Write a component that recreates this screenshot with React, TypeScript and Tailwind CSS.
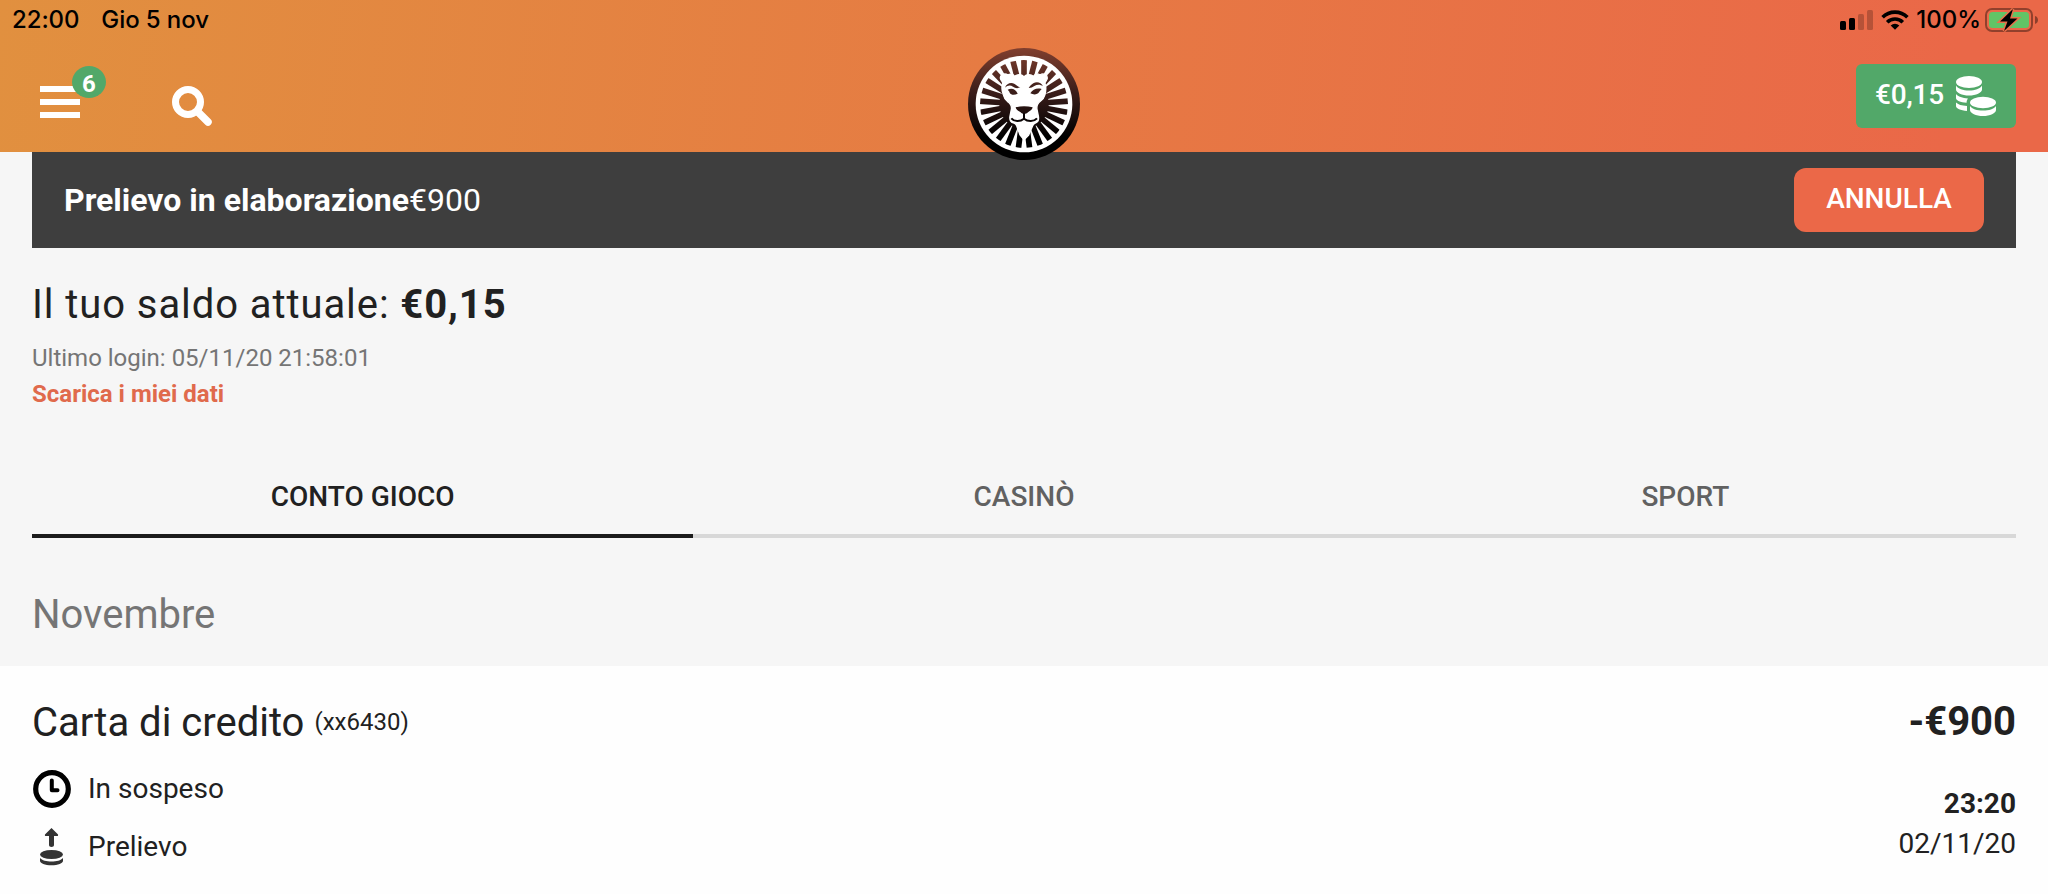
import { ReactNode } from 'react';

const GAPS = Array.from({ length: 25 }, (_, i) => 7.2 + i * 14.4);

const TABS = ['CONTO GIOCO', 'CASINÒ', 'SPORT'];

function SignalIcon() {
  return (
    <svg width="34" height="20" viewBox="0 0 34 20">
      <rect x="0" y="11" width="6" height="9" rx="1.5" />
      <rect x="9" y="8" width="6" height="12" rx="1.5" />
      <rect x="18" y="4" width="6" height="16" rx="1.5" opacity="0.22" />
      <rect x="27" y="0" width="6" height="20" rx="1.5" opacity="0.22" />
    </svg>
  );
}

function WifiIcon() {
  return (
    <svg width="28" height="20" viewBox="0 0 28 20" fill="none" stroke="#000" strokeWidth="3.6">
      <path d="M1.600 7.200a17.600 17.600 0 0 1 24.800 0" />
      <path d="M6.200 12.200a11 11 0 0 1 15.600 0" />
      <path d="M14 19.800l-4.300-4.400a6.200 6.200 0 0 1 8.600 0z" fill="#000" stroke="none" />
    </svg>
  );
}

function BatteryIcon() {
  return (
    <svg width="54" height="26" viewBox="0 0 54 26">
      <rect x="1" y="2" width="46" height="22" rx="6" fill="none" stroke="#000" strokeOpacity="0.38" strokeWidth="2" />
      <rect x="4" y="5" width="40" height="16" rx="3.5" fill="#62c466" />
      <path d="M50 9c2 .6 3 2.200 3 4s-1 3.400-3 4z" opacity="0.4" />
      <path d="M28 2L15 14.500h7.500L19 24l13.500-12.500H25z" fill="#000" stroke="#e9704a" strokeWidth="3" paintOrder="stroke" />
    </svg>
  );
}

function SearchIcon() {
  return (
    <svg width="42" height="42" viewBox="0 0 42 42" fill="none" stroke="#fff" strokeWidth="7" strokeLinecap="round">
      <circle cx="16" cy="16" r="12.500" />
      <path d="M26.500 26.500l9.500 9.500" strokeWidth="7.500" />
    </svg>
  );
}

function CoinsIcon() {
  return (
    <svg width="40" height="40" viewBox="0 0 40 40" fill="#fff">
      <ellipse cx="13" cy="6" rx="13" ry="6" />
      <path d="M0 9.500c2 3.200 7 5 13 5s11-1.800 13-5v4c0 3.300-6 6-13 6s-13-2.700-13-6z" />
      <path d="M0 18c2 2.600 6.500 4.200 12 4.400-1 1.200-1.400 2.600-1.400 4.400C4.500 26.500 0 24.500 0 22z" />
      <path d="M0 26.500c2 2 5.500 3.200 11 3.500v5C4.500 34.500 0 32.500 0 30z" />
      <ellipse cx="27" cy="26.500" rx="13" ry="5.800" />
      <path d="M14 30c2 3 7 4.600 13 4.600s11-1.600 13-4.600v4c0 3.300-6 6-13 6s-13-2.700-13-6z" />
    </svg>
  );
}

function ClockIcon() {
  return (
    <svg width="38" height="38" viewBox="0 0 38 38" fill="none" stroke="#000">
      <circle cx="19" cy="19" r="16.300" strokeWidth="5.200" />
      <path d="M18.800 10.500v9.800h5.700" strokeWidth="4" strokeLinecap="round" strokeLinejoin="round" />
    </svg>
  );
}

function WithdrawIcon() {
  return (
    <svg width="38" height="38" viewBox="0 0 38 38" fill="#333">
      <path d="M18.500 0l6.300 6.200c.7.800.3 1.800-.7 1.800H21v8.900c0 1.200-1 2-2.500 2s-2.500-.8-2.500-2V8h-3.100c-1 0-1.400-1-.7-1.800z" />
      <ellipse cx="18.500" cy="26.500" rx="11.500" ry="4.600" />
      <path d="M7 30c2 2.400 6.500 3.600 11.500 3.600S28 32.400 30 30v2.700c0 2.500-5 4.500-11.500 4.500S7 35.200 7 32.700z" />
    </svg>
  );
}

function LionLogo() {
  return (
    <svg width="112" height="112" viewBox="54 24 336 336">
      <defs>
        <linearGradient id="lion" gradientUnits="userSpaceOnUse" x1="0" y1="24" x2="0" y2="290">
          <stop offset="0" stopColor="#813f2e" />
          <stop offset="0.5" stopColor="#3a1d1a" />
          <stop offset="1" stopColor="#000" />
        </linearGradient>
      </defs>
      <circle cx="222" cy="192" r="168" fill="url(#lion)" />
      <circle cx="222" cy="192" r="145" fill="#fff" />
      <circle cx="222" cy="192" r="132" fill="url(#lion)" />
      {GAPS.map((deg) => (
        <path key={deg} d="M213.500 56h17l-7.500 62h-2z" fill="#fff" transform={`rotate(${deg} 222 192)`} />
      ))}
      <path
        d="M222 110c-8-7-20-8-28-1-5-7-14-9-20-4-12-8-28 2-21 15 3 5 5 6 5 10-4 12-2 24 2 34 2 8 4 14 12 20 10 6 14 12 12 24l-4 20c-2 12 2 20 12 21 4 1 6 4 8 8l10 28 12 14 14-14 12-28c2-4 4-7 8-8 9-3 11-11 9-21l-4-20c-2-12 2-18 10-24 8-6 12-12 14-20 3-12 4-22 0-34 0-4 4-7 6-12 4-12-10-21-21-13-7-5-15-3-20 4-8-7-20-6-28 1z"
        fill="#fff"
        stroke="#fff"
        strokeWidth="4"
      />
      <g fill="url(#lion)">
        <path d="M165 143c5-14 19-17 29-11 6 4 11 9 17 9-8 6-16 3-22-1-8-6-16-5-24 3z" />
        <path d="M279 139c-5-12-19-15-29-9-6 4-10 8-14 14 7 0 12-3 17-6 9-5 18-5 26 1z" />
        <path d="M173 149c12-6 24-2 30 12-10 5-20 4-24-3-1-4-3-6-6-9z" />
        <path d="M275 147c-13-4-27 0-34 13 10 5 21 4 26-3 2-4 4-6 8-10z" />
        <path d="M197 202c16-4 34-4 51 0-1 8-9 11-14 15-6 6-17 6-22 0-5-4-14-7-15-15z" />
      </g>
      <g fill="none" stroke="#0c0606" strokeWidth="6">
        <path d="M222 219v17" />
        <path d="M184 235c8 10 26 11 38 1 12 10 30 9 39-1" />
      </g>
    </svg>
  );
}

function StatusRow({ icon, label }: { icon: ReactNode; label: string }) {
  return (
    <div className="flex items-center gap-[17px] h-10 pl-px text-[28px] leading-10">
      {icon}
      <span>{label}</span>
    </div>
  );
}

export default function App() {
  return (
    <div className="w-full h-[894px] overflow-hidden bg-[#f6f6f6] text-[#212121] font-['Roboto',sans-serif]">
      <header className="h-[152px] bg-[linear-gradient(97deg,#e1903f_0%,#e67b43_48%,#ea6848_95%)]">
        <div className="flex items-center justify-between h-10 pl-3 pr-[9px] text-black text-2xl font-medium font-['Inter',sans-serif]">
          <div className="flex gap-[22px] tracking-[-0.100px]">
            <span>22:00</span>
            <span>Gio 5 nov</span>
          </div>
          <div className="flex items-center">
            <SignalIcon />
            <div className="ml-[7px]"><WifiIcon /></div>
            <span className="ml-[7px] mr-1">100%</span>
            <BatteryIcon />
          </div>
        </div>

        <div className="grid grid-cols-3 px-8">
          <div className="flex items-start pl-2 pt-[46px]">
            <button className="relative flex flex-col gap-[7.500px] w-10" aria-label="Menu">
              <span className="h-[5.500px] w-full bg-white" />
              <span className="h-[5.500px] w-full bg-white" />
              <span className="h-[5.500px] w-full bg-white" />
              <span className="absolute left-8 -top-5 w-[34px] h-8 rounded-[50%] bg-[#52a869] text-white text-2xl leading-[36px] font-bold text-center">6</span>
            </button>
            <button className="ml-[92px]" aria-label="Cerca"><SearchIcon /></button>
          </div>
          <div className="relative z-10 flex justify-center h-[112px] pt-2">
            <LionLogo />
          </div>
          <div className="flex justify-end pt-6">
            <button className="flex items-center justify-between w-40 h-16 pl-[19px] pr-5 rounded-md bg-[#52a869] text-white text-[28px] font-medium">
              <span className="pb-0.5 tracking-[-0.200px]">€0,15</span>
              <CoinsIcon />
            </button>
          </div>
        </div>
      </header>

      <main>
        <div className="px-8">
          <div className="flex items-center justify-between h-24 px-8 bg-[#3e3e3e] text-white text-[32px]">
            <p><strong className="font-bold">Prelievo in elaborazione</strong>€900</p>
            <button className="w-[190px] h-16 pb-0.5 rounded-xl bg-[#eb6848] text-[28px] font-medium">ANNULLA</button>
          </div>

          <h1 className="mt-[33px] text-[40px] leading-[48px] tracking-[0.920px]">
            Il tuo saldo attuale: <strong className="font-bold">€0,15</strong>
          </h1>
          <p className="mt-[11px] text-2xl leading-9 text-[#757575]">Ultimo login: 05/11/20 21:58:01</p>
          <a className="block text-2xl leading-9 font-bold text-[#e06a4c]">Scarica i miei dati</a>

          <nav className="grid grid-cols-3 mt-[65px]">
            {TABS.map((tab, i) => (
              <button
                key={tab}
                className={`pb-[17px] border-b-4 text-[28px] leading-10 font-medium ${i === 0 ? 'border-[#1c1c1c]' : 'border-[#d8d8d8] text-[#616161]'}`}
              >
                {tab}
              </button>
            ))}
          </nav>

          <h2 className="mt-[53px] pb-[27px] text-[40px] leading-[48px] text-[#757575]">Novembre</h2>
        </div>

        <section className="flex justify-between h-[228px] px-8 pt-[33px] bg-[#fefefe]">
          <div>
            <div className="flex items-center gap-2.5">
              <h3 className="text-[40px] leading-[48px]">Carta di credito</h3>
              <span className="pb-[3px] text-2xl">(xx6430)</span>
            </div>
            <div className="flex flex-col gap-[17.500px] mt-[22px]">
              <StatusRow icon={<ClockIcon />} label="In sospeso" />
              <StatusRow icon={<WithdrawIcon />} label="Prelievo" />
            </div>
          </div>
          <div className="text-right text-[28px] leading-10">
            <p className="-mt-px text-[40px] leading-[48px] font-bold">-€900</p>
            <p className="mt-[38px] font-bold">23:20</p>
            <p>02/11/20</p>
          </div>
        </section>
      </main>
    </div>
  );
}
